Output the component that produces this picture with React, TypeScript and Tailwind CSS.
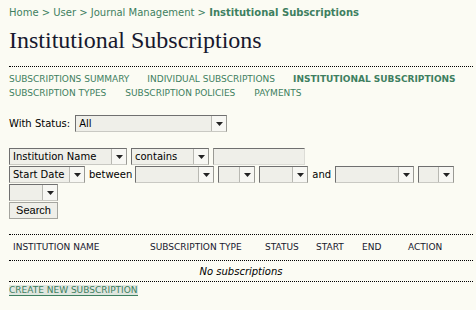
import React from 'react';

const font = { fontFamily: '"DejaVu Sans", Verdana, sans-serif' };

function Select({ label = '', width }: { label?: string; width: string }) {
  return (
    <div
      className={`flex h-[17px] ${width} items-stretch border border-t-[#6f6f6f] border-l-[#6f6f6f] border-b-[#c9c9c3] border-r-[#9a9a94] bg-[#efefe9]`}>
      <div className="flex-1 overflow-hidden whitespace-nowrap pl-[3px] text-[10px] leading-[15px] text-black">{label}</div>
      <div className="flex w-[15px] items-center justify-center border-l border-[#b8b8b2] bg-[#f7f7f3]">
        <svg width="7" height="4" viewBox="0 0 7 4">
          <path d="M0 0h7L3.5 4z" fill="#222" />
        </svg>
      </div>
    </div>
  );
}

function Dots() {
  return <div className="h-0 border-t border-dotted border-black" />;
}

export default function App() {
  return (
    <div className="min-h-[310px] w-[476px] bg-[#fbfbf3] pl-[9px] pr-[3px] pt-[6px]" style={font}>
      <div className="text-[10px] leading-[14px] text-[#3e7f60]">
        Home &gt; User &gt; Journal Management &gt; <span className="font-bold">Institutional Subscriptions</span>
      </div>
      <h2
        className="mt-[6px] text-[24px] leading-[28px] text-[#17182e]"
        style={{ fontFamily: 'Georgia, "Liberation Serif", serif' }}>
        Institutional Subscriptions
      </h2>
      <div className="mt-[12px]">
        <Dots />
      </div>
      <div className="mt-[5px] text-[9px] leading-[14px] text-[#3e7f60]">
        <div className="flex gap-[18px]">
          <span>SUBSCRIPTIONS SUMMARY</span>
          <span>INDIVIDUAL SUBSCRIPTIONS</span>
          <span className="font-bold">INSTITUTIONAL SUBSCRIPTIONS</span>
        </div>
        <div className="flex gap-[19px]">
          <span>SUBSCRIPTION TYPES</span>
          <span>SUBSCRIPTION POLICIES</span>
          <span>PAYMENTS</span>
        </div>
      </div>

      <div className="mt-[15px] flex items-center gap-[5px] text-[10px] text-black">
        <span>With Status:</span>
        <Select label="All" width="w-[152px]" />
      </div>

      <div className="mt-[16px] flex flex-col gap-[1px] text-[10px] text-black">
        <div className="flex items-center gap-[4px]">
          <Select label="Institution Name" width="w-[118px]" />
          <Select label="contains" width="w-[78px]" />
          <div className="h-[17px] w-[92px] border border-t-[#6f6f6f] border-l-[#9a9a94] border-b-[#dcdcd6] border-r-[#dcdcd6] bg-[#efefe9]" />
        </div>
        <div className="flex items-center gap-[4px]">
          <Select label="Start Date" width="w-[76px]" />
          <span className="-mr-[1px]">between</span>
          <Select width="w-[79px]" />
          <Select width="w-[37px]" />
          <Select width="w-[49px]" />
          <span>and</span>
          <Select width="w-[79px]" />
          <Select width="w-[36px]" />
        </div>
        <div className="flex">
          <Select width="w-[49px]" />
        </div>
        <div className="flex">
          <button
            className="h-[17px] w-[49px] border border-[#a5a59f] bg-[#efefe9] text-[11px] leading-[15px] text-black"
            style={{ fontFamily: '"Liberation Sans", Arial, sans-serif' }}>
            Search
          </button>
        </div>
      </div>

      <div className="mt-[15px]">
        <Dots />
      </div>
      <div className="flex h-[25px] items-center pl-[4px] text-[9px] text-[#17182e]">
        <span className="w-[137px]">INSTITUTION NAME</span>
        <span className="w-[115px]">SUBSCRIPTION TYPE</span>
        <span className="w-[51px]">STATUS</span>
        <span className="w-[46px]">START</span>
        <span className="w-[46px]">END</span>
        <span>ACTION</span>
      </div>
      <Dots />
      <div className="flex h-[20px] items-center justify-center text-[10px] italic text-black">No subscriptions</div>
      <Dots />
      <div className="mt-[2px] text-[9px] leading-[12px]">
        <span className="border-b border-[#3e7f60] bg-[#dfe6df] text-[#3e7f60]">CREATE NEW SUBSCRIPTION</span>
      </div>
    </div>
  );
}
